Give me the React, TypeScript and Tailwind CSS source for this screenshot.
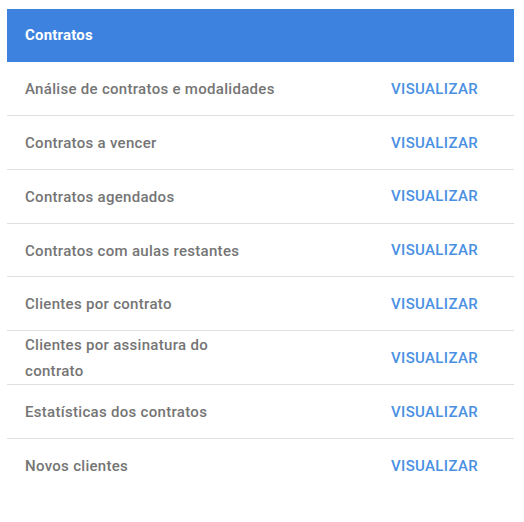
const reports = [
  ["Análise de contratos e modalidades"],
  ["Contratos a vencer"],
  ["Contratos agendados"],
  ["Contratos com aulas restantes"],
  ["Clientes por contrato"],
  ["Clientes por assinatura do", "contrato"],
  ["Estatísticas dos contratos"],
  ["Novos clientes"],
];

export default function App() {
  return (
    <div
      className="min-h-[522px] bg-white pt-[9px] px-[7px] w-[524px]"
      style={{ fontFamily: "Roboto, 'Liberation Sans', sans-serif" }}
    >
      <div className="w-[507px]">
        {/* Header */}
        <div className="h-[53px] bg-[#3d82df] flex items-center px-[18px]">
          <h2 className="text-[15px] font-bold text-white tracking-[0.2px]">Contratos</h2>
        </div>

        {/* Rows */}
        {reports.map((lines, i) => (
          <div
            key={i}
            className={
              "h-[53.86px] flex items-center justify-between pl-[18px] pr-[36px] pt-[1px] " +
              (i < reports.length - 1 ? "border-b border-[#e0e0e0]" : "")
            }
          >
            <p className="text-[15px] font-medium text-[#757575] leading-[26px] tracking-[0.3px]">
              {lines.map((l, j) => (
                <span key={j} className="block">
                  {l}
                </span>
              ))}
            </p>
            <button className="text-[15px] font-medium text-[#4a90e2] tracking-[0.35px]">
              VISUALIZAR
            </button>
          </div>
        ))}
      </div>
    </div>
  );
}
